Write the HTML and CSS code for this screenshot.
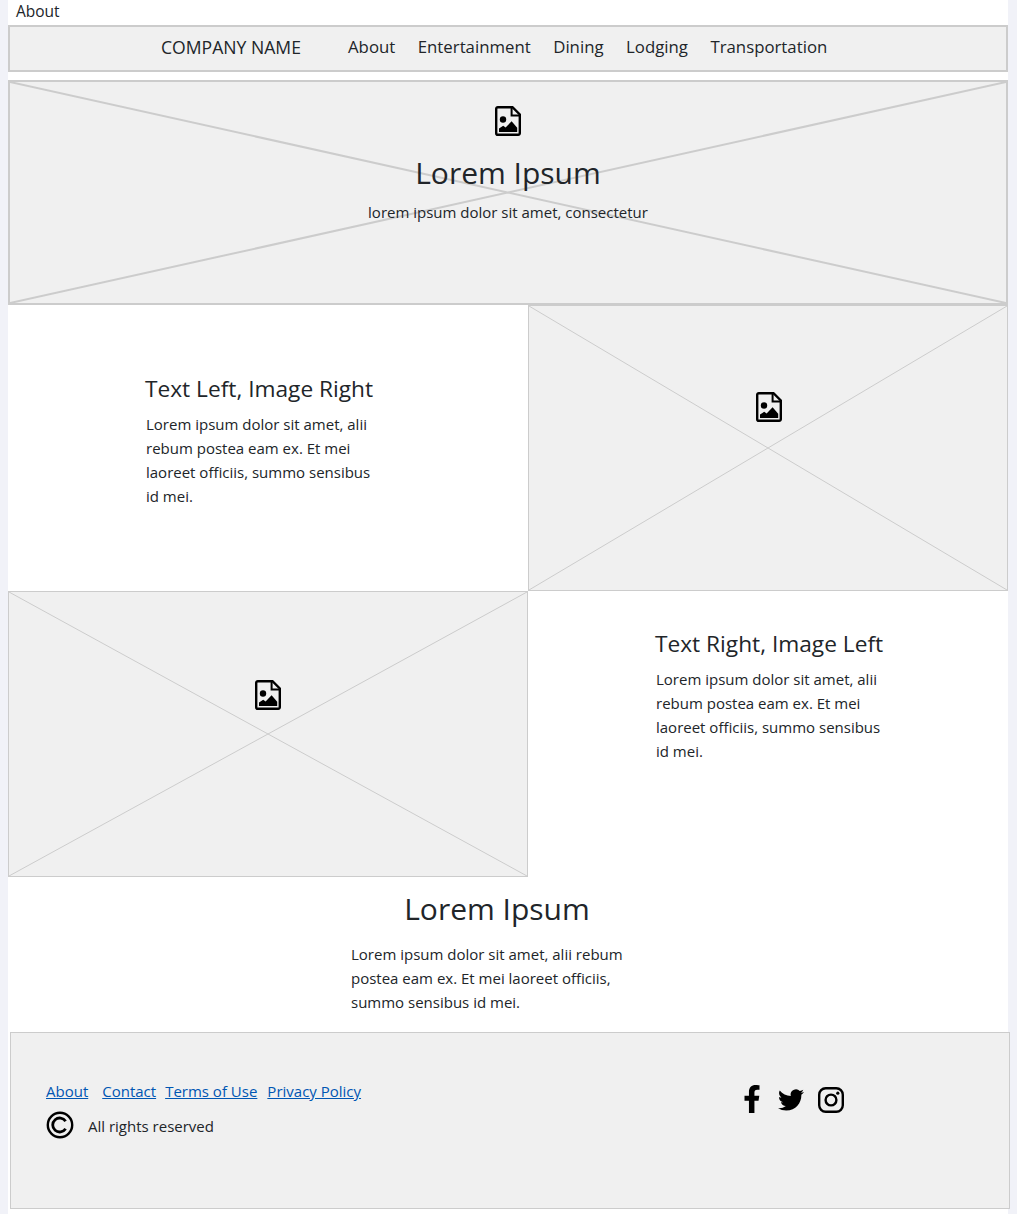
FILE: index.html
```html
<!DOCTYPE html>
<html lang="en">

<head>
  <meta charset="UTF-8">
  <meta name="viewport" content="width=device-width, initial-scale=1.0">
  <title>Company Name</title>

  <link rel="stylesheet" href="styles.css">
</head>

<body>

  <svg class="icon-defs" width="0" height="0" aria-hidden="true">
    <symbol id="file-image" viewBox="0 0 26 30">
      <path d="M2.8 1.2h14.7L24.8 8.5V27.2a1.6 1.6 0 0 1-1.6 1.6H2.8A1.6 1.6 0 0 1 1.2 27.2V2.8A1.6 1.6 0 0 1 2.8 1.2z" fill="none" stroke="#000" stroke-width="2.4"/>
      <path d="M16.6 1.2V9.4H24.8" fill="none" stroke="#000" stroke-width="2"/>
      <circle cx="8" cy="13.5" r="3.2" fill="#000"/>
      <path d="M4 26v-3.6l4.2-2.6 2.4 1.8 6-6.4 5.6 6.6V26z" fill="#000"/>
    </symbol>
    <symbol id="cross" viewBox="0 0 100 100" preserveAspectRatio="none">
      <path d="M0 0L100 100M100 0L0 100" fill="none" stroke="#ccc" vector-effect="non-scaling-stroke"/>
    </symbol>
  </svg>

  <div class="page">

    <a class="top-link">About</a>

    <nav class="navbar">
      <span class="brand">COMPANY NAME</span>
      <a>About</a>
      <a>Entertainment</a>
      <a>Dining</a>
      <a>Lodging</a>
      <a>Transportation</a>
    </nav>

    <header class="hero">
      <svg class="cross cross-thick"><use href="#cross"/></svg>
      <svg class="file-icon"><use href="#file-image"/></svg>
      <h1>Lorem Ipsum</h1>
      <p>lorem ipsum dolor sit amet, consectetur</p>
    </header>

    <section class="row">
      <div class="text-col text-left">
        <h2>Text Left, Image Right</h2>
        <p>Lorem ipsum dolor sit amet, alii rebum postea eam ex. Et mei laoreet officiis, summo sensibus id mei.</p>
      </div>
      <div class="image-col image-right">
        <svg class="cross"><use href="#cross"/></svg>
        <svg class="file-icon"><use href="#file-image"/></svg>
      </div>
    </section>

    <section class="row">
      <div class="image-col image-left">
        <svg class="cross"><use href="#cross"/></svg>
        <svg class="file-icon"><use href="#file-image"/></svg>
      </div>
      <div class="text-col text-right">
        <h2>Text Right, Image Left</h2>
        <p>Lorem ipsum dolor sit amet, alii rebum postea eam ex. Et mei laoreet officiis, summo sensibus id mei.</p>
      </div>
    </section>

    <section class="closing">
      <h1>Lorem Ipsum</h1>
      <p>Lorem ipsum dolor sit amet, alii rebum postea eam ex. Et mei laoreet officiis, summo sensibus id mei.</p>
    </section>

    <footer class="footer">
      <div class="footer-info">
        <div class="footer-links">
          <a href="#">About</a>
          <a href="#">Contact</a>
          <a href="#">Terms of Use</a>
          <a href="#">Privacy Policy</a>
        </div>
        <div class="copyright">
          <svg class="copy-icon" viewBox="0 0 28 28">
            <circle cx="14" cy="14" r="12.2" fill="none" stroke="#000" stroke-width="2.4"/>
            <path d="M19.6 10.2A7 7 0 1 0 19.6 17.8" fill="none" stroke="#000" stroke-width="2.8"/>
          </svg>
          <span>All rights reserved</span>
        </div>
      </div>
      <div class="social">
        <svg class="fb" viewBox="0 0 320 512"><path d="M279.14 288l14.22-92.66h-88.91v-60.13c0-25.35 12.42-50.06 52.24-50.06h40.42V6.26S260.43 0 225.36 0c-73.22 0-121.08 44.38-121.08 124.72v70.62H22.89V288h81.39v224h100.17V288z"/></svg>
        <svg class="tw" viewBox="0 0 24 24"><path d="M23.953 4.57a10 10 0 01-2.825.775 4.958 4.958 0 002.163-2.723c-.951.555-2.005.959-3.127 1.184a4.92 4.92 0 00-8.384 4.482C7.69 8.095 4.067 6.13 1.64 3.162a4.822 4.822 0 00-.666 2.475c0 1.71.87 3.213 2.188 4.096a4.904 4.904 0 01-2.228-.616v.06a4.923 4.923 0 003.946 4.827 4.996 4.996 0 01-2.212.085 4.936 4.936 0 004.604 3.417 9.867 9.867 0 01-6.102 2.105c-.39 0-.779-.023-1.17-.067a13.995 13.995 0 007.557 2.209c9.053 0 13.998-7.496 13.998-13.985 0-.21 0-.42-.015-.63A9.935 9.935 0 0024 4.59z"/></svg>
        <svg class="ig" viewBox="0 0 26 26">
          <rect x="1.2" y="1.2" width="23.6" height="23.6" rx="6.5" fill="none" stroke="#000" stroke-width="2.4"/>
          <circle cx="13" cy="13" r="5.4" fill="none" stroke="#000" stroke-width="2.4"/>
          <circle cx="19.8" cy="6.2" r="1.6"/>
        </svg>
      </div>
    </footer>

  </div>

</body>

</html>
```

FILE: styles.css
```css
body {
  margin: 0;
  background-color: #f1f2f8;
  font-family: "Open Sans", "Noto Sans", sans-serif;
  font-size: 15px;
  line-height: 24px;
  color: #212529;
}

.icon-defs {
  position: absolute;
}

.page {
  width: 1000px;
  height: 1214px;
  margin-left: 8px;
  background: #ffffff;
}

.top-link {
  display: block;
  height: 25px;
  padding-left: 8px;
  font-size: 15.5px;
  line-height: 23px;
}

.navbar {
  display: flex;
  box-sizing: border-box;
  height: 47px;
  align-items: center;
  padding: 0 0 4px 151px;
  background: #f0f0f0;
  border: 2px solid #ccc;
  font-size: 16.8px;
}

.navbar a {
  margin-right: 22.5px;
}

.brand {
  width: 187px;
  font-size: 17.6px;
}

.hero {
  position: relative;
  box-sizing: border-box;
  height: 225px;
  margin-top: 8px;
  padding-top: 24px;
  background: #f0f0f0;
  border: 2px solid #ccc;
  text-align: center;
}

.hero .file-icon {
  margin: 0 auto 17px;
}

.hero h1 {
  position: relative;
  margin: 0;
  font-size: 30px;
  font-weight: 400;
  line-height: 40px;
}

.hero p {
  position: relative;
  margin: 7px 0 0;
}

.cross {
  position: absolute;
  top: 0;
  left: 0;
  width: 100%;
  height: 100%;
  stroke-width: 1;
}

.cross-thick {
  stroke-width: 2;
}

.file-icon {
  position: relative;
  display: block;
  width: 26px;
  height: 30px;
}

.row {
  display: flex;
  height: 286px;
}

.text-col {
  box-sizing: border-box;
  width: 520px;
}

.text-col h2 {
  width: 240px;
  margin: 0 0 8px -1px;
  font-size: 22.7px;
  font-weight: 400;
  line-height: 32px;
}

.text-col p {
  width: 240px;
  margin: 0;
}

.text-left {
  padding: 68px 0 0 138px;
}

.text-right {
  width: 480px;
  padding: 37px 0 0 128px;
}

.text-left h2,
.text-right h2 {
  margin-bottom: 7px;
}

.image-col {
  position: relative;
  box-sizing: border-box;
  display: flex;
  align-items: center;
  justify-content: center;
  background: #f0f0f0;
  border: 1px solid #ccc;
}

.image-right {
  width: 480px;
}

.image-right .file-icon {
  margin: 0 0 82px 2px;
}

.image-left {
  width: 520px;
}

.image-left .file-icon {
  margin: 0 0 78px;
}

.closing {
  box-sizing: border-box;
  height: 155px;
  width: 292px;
  margin-left: 343px;
  padding-top: 12px;
}

.closing h1 {
  margin: 0 0 13px;
  font-size: 30px;
  font-weight: 400;
  line-height: 40px;
  text-align: center;
}

.closing p {
  margin: 0;
}

.footer {
  display: flex;
  box-sizing: border-box;
  position: relative;
  justify-content: space-between;
  width: 1000px;
  height: 177px;
  margin-left: 2px;
  padding: 46px 165px 0 35px;
  background: #f0f0f0;
  border: 1px solid #ccc;
}

.footer-links {
  display: flex;
  height: 24px;
}

.footer-links a {
  margin-right: 10px;
  color: #0056b3;
}

.footer-links a:first-child {
  margin-right: 14px;
}

.footer-links a:nth-child(2) {
  margin-right: 9px;
}

.copyright {
  display: flex;
  align-items: center;
  gap: 14px;
  margin-top: 8px;
}

.copyright span {
  padding-top: 2px;
}

.copy-icon {
  width: 28px;
  height: 28px;
}

.social {
  display: flex;
  align-items: center;
  height: 28px;
  margin-top: 6px;
}

.fb {
  width: 18px;
  height: 28px;
  margin-right: 17px;
}

.tw {
  width: 26px;
  height: 26px;
  margin-top: 2px;
  margin-right: 14px;
}

.ig {
  width: 26px;
  height: 26px;
  margin-top: 2px;
}
```
